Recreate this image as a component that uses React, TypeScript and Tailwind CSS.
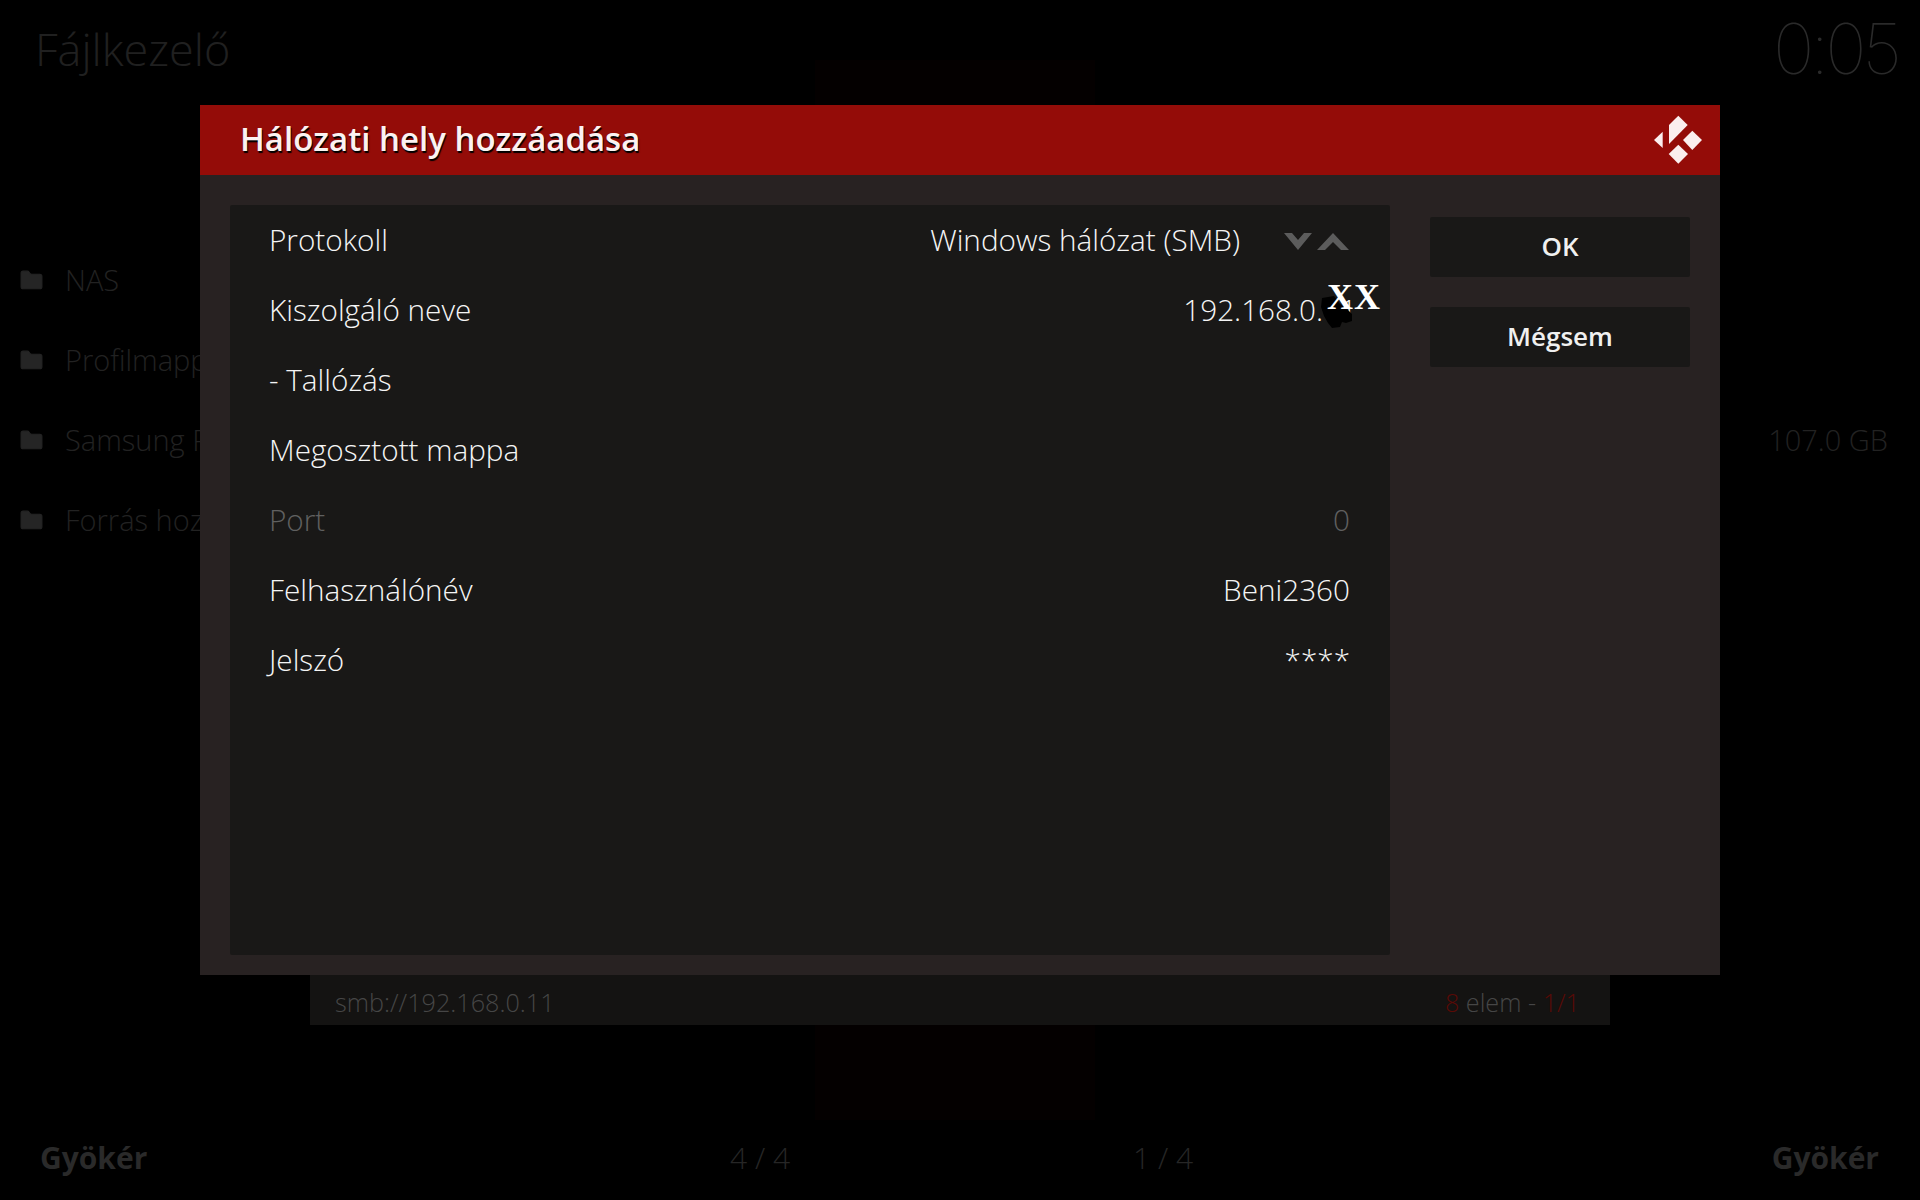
import { Folder } from 'lucide-react';

const folders = ['NAS', 'Profilmappa', 'Samsung Portable', 'Forrás hozzáadása'];

const rows = [
  { label: 'Protokoll', value: 'Windows hálózat (SMB)', spinner: true },
  { label: 'Kiszolgáló neve', value: '192.168.0.11', masked: true },
  { label: '- Tallózás' },
  { label: 'Megosztott mappa' },
  { label: 'Port', value: '0', disabled: true },
  { label: 'Felhasználónév', value: 'Beni2360' },
  { label: 'Jelszó', value: '****' },
];

function KodiLogo() {
  return (
    <svg width="56" height="56" viewBox="0 0 56 56" fill="#fbeeee">
      <polygon points="4,28 12.7,19.7 12.7,36" />
      <polygon points="28.3,3.7 37.7,13 19,32 19,13" />
      <polygon points="42.3,18.7 52,28 42.3,38 33,28" />
      <polygon points="28.3,32.7 38,42 28.3,51.7 18.7,42" />
    </svg>
  );
}

function Redaction() {
  return (
    <>
      <svg width="34" height="34" viewBox="0 0 34 34" className="absolute left-[1090px] top-[21px]">
        <path
          d="M2 2 L14 0 L20 8 L26 12 L32 18 L32 25 L26 27 L22 26 L20 31 L12 32 L8 27 L4 20 L1 11 Z"
          fill="#000"
        />
      </svg>
      <span className="absolute left-[1097px] top-[1px] font-['Liberation_Serif',serif] text-[36px] font-bold leading-[42px] tracking-[1px] text-white">
        XX
      </span>
    </>
  );
}

function Row({ row }: { row: (typeof rows)[number] }) {
  const color = row.disabled ? 'text-[#606060]' : 'text-[#f5f5f5]';
  return (
    <div className={`relative flex h-[70px] items-center justify-between pl-[39px] pr-[40px] text-[29.7px] font-light ${color}`}>
      <span>{row.label}</span>
      <div className={row.masked ? 'mr-[-7px] flex items-center' : 'flex items-center'}>
        {row.value && <span>{row.value}</span>}
        {row.spinner && (
          <svg width="66" height="18" viewBox="0 0 66 18" className="ml-[44px] mt-[4px]" fill="#5c5c5c">
            <polygon points="0,0 8,0 14,7 20,0 28,0 14,17" />
            <polygon points="33,17 41,17 49,9 57,17 65,17 49,0" />
          </svg>
        )}
      </div>
      {row.masked && <Redaction />}
    </div>
  );
}

export default function App() {
  return (
    <div className="relative h-[1200px] w-[1920px] overflow-hidden bg-black font-['Open_Sans',sans-serif]">
      {/* tenue resplandor rojo detrás del diálogo */}
      <div className="absolute left-[815px] top-[60px] h-[1060px] w-[280px] bg-[#040000]" />

      <div className="relative flex h-full flex-col">
        <header className="flex h-[100px] items-start justify-between pl-[35px] pr-[22px]">
          <h1 className="mt-[18px] text-[45px] font-light leading-[62px] text-[#202020]">Fájlkezelő</h1>
          <span className="mt-[8px] font-['Inter',sans-serif] text-[70px] font-thin leading-[82px] tracking-[-4px] text-[#2a2a2a]">
            0:05
          </span>
        </header>

        <div className="mt-[140px] h-[735px] pl-[19px] pr-[32px]">
          {folders.map((name, i) => (
            <div key={name} className="flex h-[80px] items-center text-[29px] font-light text-[#222222]">
              <Folder className="h-[25px] w-[25px] text-[#252525]" fill="#252525" strokeWidth={1} />
              <span className="ml-[21px]">{name}</span>
              {i === 2 && <span className="ml-auto text-[#222222]">107.0 GB</span>}
            </div>
          ))}
        </div>

        <div className="mx-[310px] flex h-[50px] items-center justify-between bg-[#141312] pl-[25px] pr-[30px] pt-[5px] text-[25.2px] font-light text-[#464646]">
          <span>smb://192.168.0.11</span>
          <span>
            <span className="text-[#5a0a06]">8</span> elem - <span className="text-[#5a0a06]">1/1</span>
          </span>
        </div>

        <footer className="mt-[110px] flex items-center pl-[40px] pr-[41px] text-[30px]">
          <span className="w-[690px] font-bold text-[#2a2a2a]">Gyökér</span>
          <span className="w-[403px] font-light text-[#262626]">4 / 4</span>
          <span className="font-light text-[#262626]">1 / 4</span>
          <span className="ml-auto font-bold text-[#2a2a2a]">Gyökér</span>
        </footer>
      </div>

      <section className="absolute left-[200px] top-[105px] flex h-[870px] w-[1520px] flex-col bg-[#282222]">
        <div className="flex h-[70px] items-center justify-between bg-[#940c08] pl-[40px] pr-[14px]">
          <h2 className="pb-[2px] text-[33px] font-semibold text-[#fbf2f2] [text-shadow:1px_2px_1px_#000]">
            Hálózati hely hozzáadása
          </h2>
          <KodiLogo />
        </div>
        <div className="flex flex-1 pb-[20px] pl-[30px] pr-[30px] pt-[30px]">
          <div className="relative w-[1160px] rounded-[2px] bg-[#191817]">
            {rows.map((row) => (
              <Row key={row.label} row={row} />
            ))}
          </div>
          <div className="ml-[40px] flex w-[260px] flex-col gap-[30px] pt-[12px]">
            <button type="button" className="h-[60px] rounded-[2px] bg-[#191817] pb-[2px] text-[26px] font-semibold text-[#f0f0f0]">
              OK
            </button>
            <button type="button" className="h-[60px] rounded-[2px] bg-[#191817] pb-[2px] text-[26px] font-semibold text-[#f0f0f0]">
              Mégsem
            </button>
          </div>
        </div>
      </section>
    </div>
  );
}
